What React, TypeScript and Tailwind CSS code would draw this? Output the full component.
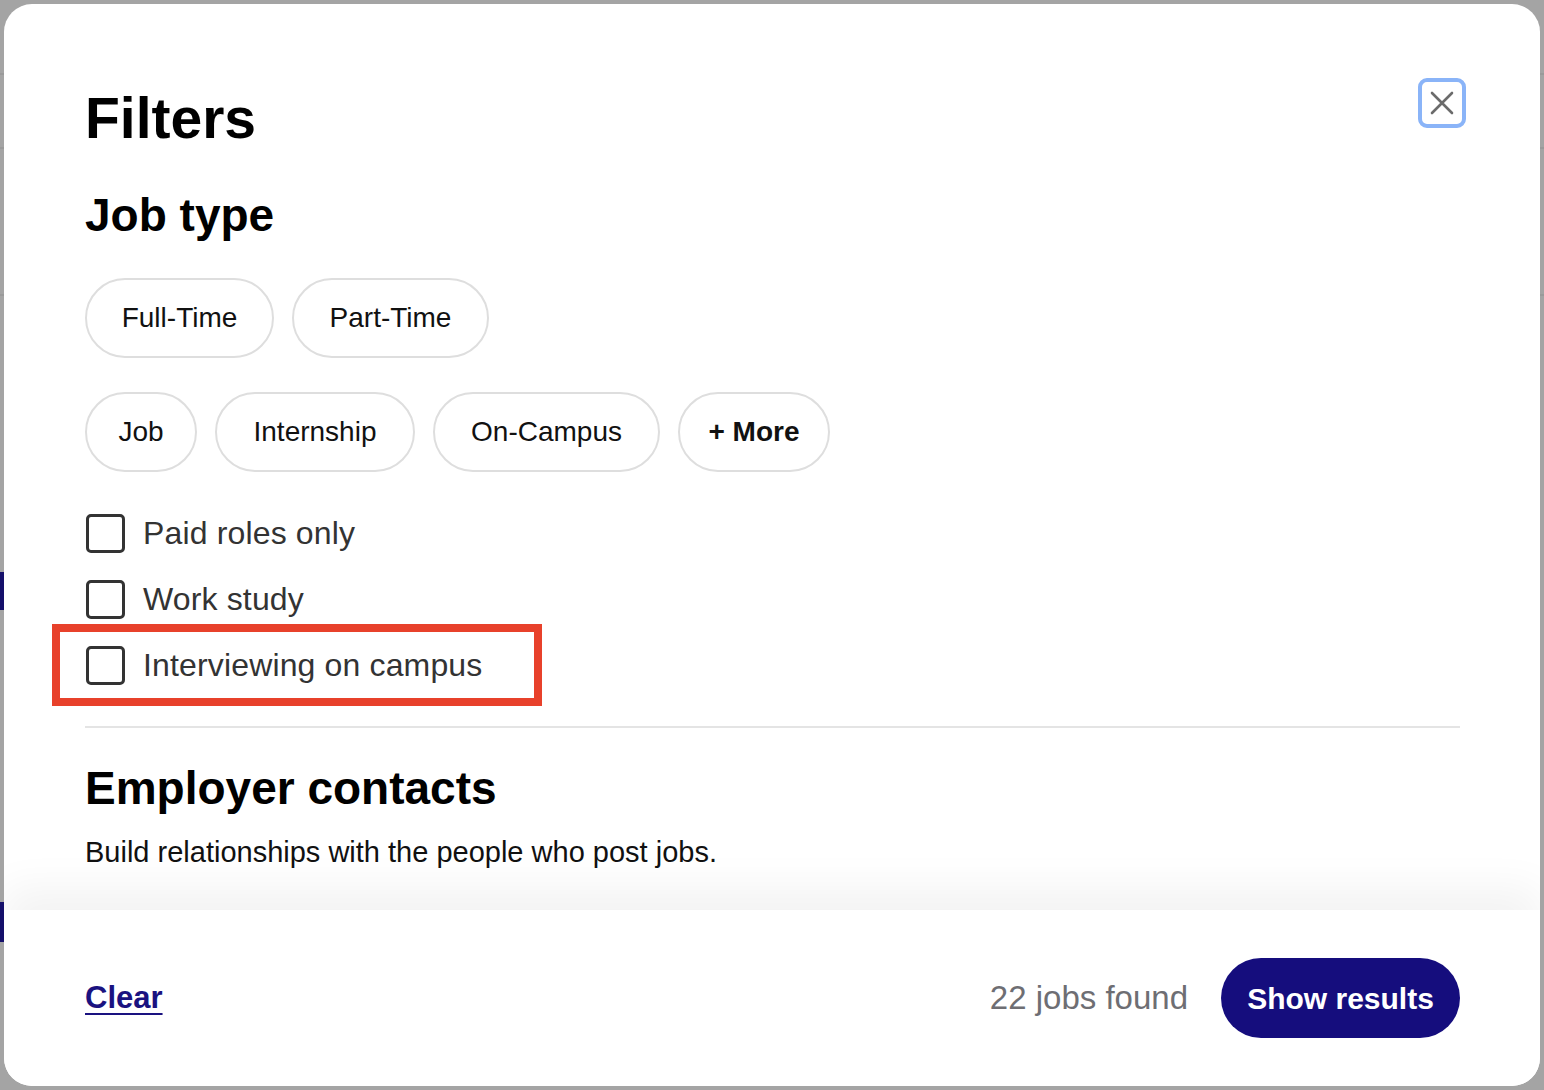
const jobTypes = [
  [
    { label: "Full-Time", width: "w-[189px]" },
    { label: "Part-Time", width: "w-[197px]" },
  ],
  [
    { label: "Job", width: "w-[112px]" },
    { label: "Internship", width: "w-[200px]" },
    { label: "On-Campus", width: "w-[227px]" },
  ],
];

const options = ["Paid roles only", "Work study", "Interviewing on campus"];

function Chip({ label, width, strong }: { label: string; width: string; strong?: boolean }) {
  return (
    <button
      type="button"
      className={
        "h-[80px] shrink-0 rounded-full border-2 border-[#dedede] bg-white text-[28px] text-[#111] " +
        width +
        (strong ? " font-bold" : " font-normal")
      }
    >
      {label}
    </button>
  );
}

function CloseIcon() {
  return (
    <svg width="24" height="24" viewBox="0 0 24 24" fill="none">
      <path d="M2 2 22 22M22 2 2 22" stroke="#6b6b6b" strokeWidth="2.6" strokeLinecap="round" />
    </svg>
  );
}

export default function App() {
  return (
    <div
      className="relative h-[1090px] w-full overflow-hidden bg-[#a4a4a4]"
      style={{ fontFamily: '"Liberation Sans", Arial, sans-serif' }}
    >
      {/* page behind the overlay */}
      <div className="h-[75px] border-b-2 border-[#9a9a9a]" />
      <div className="h-[74px] border-b-2 border-[#9a9a9a]" />
      <div className="h-[147px] border-b-2 border-[#9a9a9a]" />
      <div className="mt-[276px] h-[38px] w-[4px] bg-[#15106b]" />
      <div className="mt-[292px] h-[40px] w-[4px] border-2 border-[#15106b]" />

      {/* modal */}
      <div className="absolute inset-[4px] flex flex-col overflow-hidden rounded-[28px] bg-white">
        <button
          type="button"
          className="absolute right-[74px] top-[74px] flex h-[50px] w-[48px] items-center justify-center rounded-[9px] border-[4px] border-[#8ab4f8] bg-white"
        >
          <CloseIcon />
        </button>

        <div className="flex-1 overflow-hidden pl-[81px] pr-[80px] pt-[86px]">
          <h1 className="text-[57px] font-bold leading-[56px] text-black">Filters</h1>

          <h2 className="mt-[47px] text-[46px] font-bold leading-[45px] text-black">Job type</h2>

          <div className="mt-[40px] flex flex-col gap-[34px]">
            {jobTypes.map((row, i) => (
              <div key={i} className="flex gap-[18px]">
                {row.map((chip) => (
                  <Chip key={chip.label} label={chip.label} width={chip.width} />
                ))}
                {i === 1 && <Chip label="+ More" width="w-[152px]" strong />}
              </div>
            ))}
          </div>

          <ul className="mt-[28px]">
            {options.map((label, i) => (
              <li key={label} className="relative flex h-[66px] items-center gap-[18px] pl-[1px]">
                <span className="h-[39px] w-[39px] shrink-0 rounded-[5px] border-[3px] border-[#333]" />
                <span className="text-[32px] tracking-[0.15px] text-[#333]">{label}</span>
                {i === 2 && (
                  <span className="pointer-events-none absolute -left-[33px] -top-[8px] h-[82px] w-[490px] border-[8px] border-[#e8412b]" />
                )}
              </li>
            ))}
          </ul>

          <div className="mt-[28px] border-t-2 border-[#e4e4e4]" />

          <h2 className="mt-[38px] text-[46px] font-bold leading-[45px] text-black">Employer contacts</h2>
          <p className="mt-[27px] text-[29px] leading-[29px] text-[#111]">
            Build relationships with the people who post jobs.
          </p>
        </div>

        <div className="flex h-[176px] shrink-0 items-center justify-between bg-white pl-[81px] pr-[80px] shadow-[0_-22px_40px_rgba(0,0,0,0.05)]">
          <a href="#" className="text-[31px] font-bold text-[#1a1280] underline underline-offset-[5px] decoration-2">
            Clear
          </a>
          <div className="flex items-center gap-[33px]">
            <span className="text-[33px] text-[#6e6e73]">22 jobs found</span>
            <button
              type="button"
              className="h-[80px] w-[239px] rounded-full bg-[#150d7d] text-[30px] font-bold text-white"
            >
              Show results
            </button>
          </div>
        </div>
      </div>
    </div>
  );
}
